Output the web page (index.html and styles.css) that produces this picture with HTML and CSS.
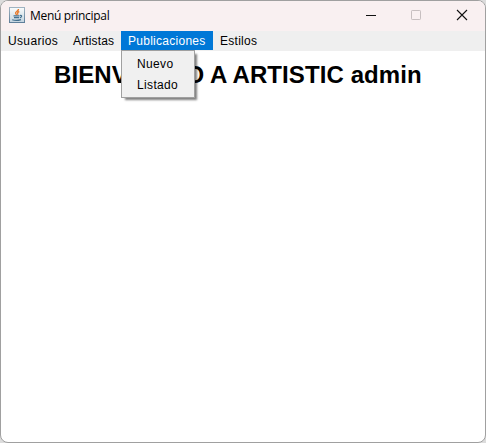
FILE: index.html
```html
<!DOCTYPE html>
<html lang="es">
<head>
<meta charset="utf-8">
<title>Menú principal</title>
<link rel="stylesheet" href="styles.css">
</head>
<body>
<div class="window">
  <header class="titlebar">
    <svg class="app-icon" width="16" height="16" viewBox="0 0 16 16">
      <defs><linearGradient id="tile" x1="0" y1="0" x2="0" y2="1"><stop offset="0" stop-color="#a0b3c1"/><stop offset="1" stop-color="#5f7f9a"/></linearGradient>
      <linearGradient id="face" x1="0" y1="0" x2="0" y2="1"><stop offset="0" stop-color="#fafcfc"/><stop offset="1" stop-color="#c3d3df"/></linearGradient></defs>
      <rect x=".5" y=".5" width="15" height="15" fill="url(#face)" stroke="url(#tile)"/>
      <path d="M9.5 2C9.8 4 6 4.5 6.6 6.3L7.7 8M10.3 4.5C8.3 5.2 8.2 6 9 7.8" fill="none" stroke="#e77b2f" stroke-width="1.4"/>
      <path d="M4.5 8.8H10.5M5 10.7H10M3.2 12.8Q7.5 14.2 12 12.6M11 8.5C13.3 8 13 10.2 10.8 10.8" fill="none" stroke="#44708f" stroke-width="1.2"/>
    </svg>
    <h1 class="title">Menú principal</h1>
    <div class="controls">
      <svg width="46" height="29" viewBox="0 0 46 29"><path d="M18 14.5H28" stroke="#111"/></svg>
      <svg width="46" height="29" viewBox="0 0 46 29"><rect x="17.5" y="9.5" width="9" height="9" rx=".7" fill="none" stroke="#c7bfc0"/></svg>
      <svg width="46" height="29" viewBox="0 0 46 29"><path d="M17 9L27 19M27 9L17 19" stroke="#111" stroke-width="1.1"/></svg>
    </div>
  </header>
  <nav class="menubar">
    <span class="menu users">Usuarios</span>
    <span class="menu artists">Artistas</span>
    <div class="menu active">Publicaciones
      <div class="dropdown">
        <div class="item">Nuevo</div>
        <div class="item">Listado</div>
      </div>
    </div>
    <span class="menu">Estilos</span>
  </nav>
  <main class="content"><h2 class="welcome">BIENVENIDO A ARTISTIC admin</h2></main>
</div>
</body>
</html>
```
FILE: styles.css
```css
* { box-sizing: border-box; }
body {
  margin: 0;
  height: 443px;
  overflow: hidden;
  background: #dcdcdc;
  font: 12px "Liberation Sans", Arial, sans-serif;
  color: #000;
}
.window {
  width: 486px;
  height: 443px;
  border: 1px solid #a0a0a0;
  border-radius: 8px;
  background: #fff;
  overflow: hidden;
  display: flex;
  flex-direction: column;
}
.titlebar {
  height: 30px;
  flex: none;
  display: flex;
  align-items: flex-start;
  background: #f9f0f1;
  padding-left: 8px;
}
.app-icon { margin-top: 6px; }
.title {
  margin: 6px 0 0 5px;
  font: 12px/17px "Open Sans", "Noto Sans", sans-serif;
  letter-spacing: -0.32px;
}
.controls { margin: 0 -1px 0 auto; display: flex; }
.menubar {
  height: 20px;
  flex: none;
  display: flex;
  background: #efefef;
}
.menu {
  position: relative;
  height: 19px;
  padding: 0 7px;
  line-height: 20px;
  letter-spacing: 0.27px;
  white-space: nowrap;
}
.users { width: 65px; letter-spacing: 0.35px; }
.artists { width: 55px; letter-spacing: 0.15px; }
.active { width: 92px; background: #0078d7; color: #fff; }
.dropdown {
  position: absolute;
  z-index: 1;
  top: 19px;
  left: 0;
  width: 74px;
  height: 48px;
  padding: 3px 0 0 15px;
  border: 1px solid #a0a0a0;
  background: #f0f0f0;
  box-shadow: 3px 3px 2px -1px rgba(0, 0, 0, .5);
  color: #000;
}
.item { height: 21px; line-height: 20px; letter-spacing: 0.35px; }
.content { flex: 1; }
.welcome {
  margin: 10px 0 0 53px;
  font: bold 24px/28px "Liberation Sans", Arial, sans-serif;
  letter-spacing: 0.09px;
  white-space: nowrap;
}
```
